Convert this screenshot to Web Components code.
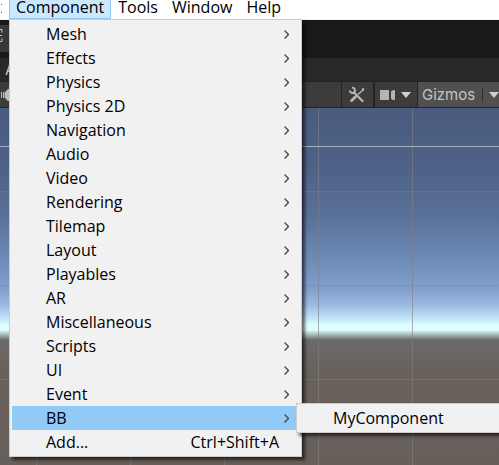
<!DOCTYPE html>
<html lang="en">
<head>
<meta charset="utf-8">
<title>Scene editor</title>
<style>
  html, body { height: 100%; margin: 0; overflow: hidden; }
  body { font: 16px/24px "Open Sans", "Noto Sans", sans-serif; color: #000; }
</style>
</head>
<body>
<editor-window>
  <menu-bar slot="menu">
    <menu-title class="cut">t</menu-title>
    <menu-title active>Component</menu-title>
    <menu-title>Tools</menu-title>
    <menu-title>Window</menu-title>
    <menu-title>Help</menu-title>
  </menu-bar>
  <scene-header slot="header"></scene-header>
  <scene-view slot="scene"></scene-view>
  <drop-menu slot="popup">
    <menu-entry more>Mesh</menu-entry>
    <menu-entry more>Effects</menu-entry>
    <menu-entry more>Physics</menu-entry>
    <menu-entry more>Physics 2D</menu-entry>
    <menu-entry more>Navigation</menu-entry>
    <menu-entry more>Audio</menu-entry>
    <menu-entry more>Video</menu-entry>
    <menu-entry more>Rendering</menu-entry>
    <menu-entry more>Tilemap</menu-entry>
    <menu-entry more>Layout</menu-entry>
    <menu-entry more>Playables</menu-entry>
    <menu-entry more>AR</menu-entry>
    <menu-entry more>Miscellaneous</menu-entry>
    <menu-entry more>Scripts</menu-entry>
    <menu-entry more>UI</menu-entry>
    <menu-entry more>Event</menu-entry>
    <menu-entry more selected>BB
      <drop-menu slot="submenu" sub><menu-entry>MyComponent</menu-entry></drop-menu>
    </menu-entry>
    <menu-entry keys="Ctrl+Shift+A">Add...</menu-entry>
  </drop-menu>
</editor-window>

<script>
class Base extends HTMLElement {
  constructor() {
    super();
    this.attachShadow({ mode: 'open' }).innerHTML =
      '<style>:host,*{box-sizing:border-box}button{font:inherit;color:inherit;border:0;margin:0;padding:0;background:none;text-align:left}</style>' + this.view();
  }
}

customElements.define('editor-window', class extends Base {
  view() { return `<style>
    :host { display: flex; flex-direction: column; height: 100%; position: relative; overflow: hidden; }
    ::slotted([slot=scene]) { flex: 1; }
    ::slotted([slot=popup]) { position: absolute; left: 9px; top: 19px; }
    </style><slot name="menu"></slot><slot name="header"></slot><slot name="scene"></slot><slot name="popup"></slot>`; }
});

customElements.define('menu-bar', class extends Base {
  view() { return `<style>
    :host { display: block; background: #fff; border-bottom: 1px solid #f0f0f0; height: 20px; }
    nav { display: flex; height: 19px; }
    </style><nav><slot></slot></nav>`; }
});

customElements.define('menu-title', class extends Base {
  view() { return `<style>
    :host { display: block; }
    button { display: flex; align-items: flex-start; height: 19px; line-height: 14px; padding: 0 6px; border: 1px solid transparent; border-top: 0; white-space: nowrap; }
    :host([active]) button { background: #cce8ff; border-color: #90c8f6; }
    :host(.cut) button { width: 9px; justify-content: flex-end; padding-left: 0; overflow: hidden; }
    </style><button type="button"><slot></slot></button>`; }
});

customElements.define('scene-header', class extends Base {
  view() { return `<style>
    :host { display: block; background: #191919; color: #c4c4c4; font: 15px/24px Inter, "Liberation Sans", sans-serif; }
    .top { height: 38px; padding: 5px 0 6px; }
    .tool { display: block; width: 40px; height: 27px; background: #383838; }
    .tabs { height: 24px; background: #282828; padding-left: 5px; border-bottom: 1px solid #232323; }
    .bar { height: 26px; background: #3c3c3c; border-bottom: 1px solid #232323; display: flex; }
    .bar button { height: 25px; display: flex; align-items: center; background: #3c3c3c; border-left: 1px solid #232323; }
    .tools { margin-left: auto; width: 33px; padding-left: 6px; border-right: 1px solid #232323; }
    .cam { width: 43px; padding-left: 5px; gap: 6px; }
    .bar .giz { width: 82px; padding-left: 4px; background: #505050; overflow: hidden; }
    .giz i { width: 1px; height: 15px; background: #303030; margin: 0 6px 0 auto; }
    svg { display: block; flex: none; }
    .bar .sound { width: 9px; overflow: hidden; border: 0; }
    </style>
    <div class="top"><button class="tool" type="button" aria-label="Transform tool"><svg width="9" height="27" stroke="#c4c4c4" fill="none"><path d="M0 4.500h2v3M0 10.500h2M0 16.500h2v-3"/></svg></button></div>
    <div class="tabs">A</div>
    <div class="bar">
      <button class="sound" type="button" aria-label="Audio"><svg width="9" height="16" fill="#bcbcbc"><path d="M1 5h1v6H1zM3 5h1v6H3zM4.500 5.500L8 2h1v12H8L4.500 10.500z"/></svg></button>
      <button class="tools" type="button" aria-label="Editor tools"><svg width="18" height="18" viewBox="0 0 18 18" fill="none" stroke="#b4b4b4"><path d="M6 6.500l8.500 8.500" stroke-width="2.300" stroke-linecap="round"/><path d="M4 1.800A2.600 2.600 0 1 1 1.800 4.500" stroke-width="2"/><path d="M15 4L10 8.500" stroke-width="1.500"/><path d="M15 1.800l1.500 1.500-1 1.700-2-1.700z" fill="#b4b4b4" stroke="none"/><path d="M7.500 10.800L3.500 14.800" stroke-width="2.800" stroke-linecap="round"/></svg></button>
      <button class="cam" type="button" aria-label="Scene camera"><svg width="15" height="12" fill="#b4b4b4"><path d="M0 1h9v10H0zM11 3q0-2 4-2v10q-4 0-4-2z"/></svg><svg width="10" height="6" fill="#d0d0d0"><path d="M0 0h10L5 6z"/></svg></button>
      <button class="giz" type="button"><span>Gizmos</span><i></i><svg width="10" height="6" fill="#d0d0d0"><path d="M0 0h10L5 6z"/></svg></button>
    </div>`; }
});

customElements.define('scene-view', class extends Base {
  view() { return `<style>
    :host { display: block; background:
      linear-gradient(#a4b0c2, #a4b0c2) 0 38px / 100% 1px no-repeat,
      repeating-linear-gradient(90deg, transparent 0 36px, #80808099 36px 37px, transparent 37px 94px),
      linear-gradient(#80808066, #80808066) 0 83px / 100% 1px no-repeat,
      linear-gradient(#80808066, #80808066) 0 177px / 100% 1px no-repeat,
      linear-gradient(#80808066, #80808066) 0 271px / 100% 1px no-repeat,
      linear-gradient(#495c7f 0, #4d6286 60px, #5a7199 110px, #7291bd 160px, #83a0ce 182px, #9dbce3 198px, #bfdff5 209px, #dcffff 217px, #e0ffff 222px, #a5b4b5 227px, #6c6a69 232px, #6b6563 245px, #68625b 266px, #69605a 300px, #675f5a 357px); }
    </style>`; }
});

customElements.define('drop-menu', class extends Base {
  view() { return `<style>
    :host { display: block; width: 293px; background: #f1f1f1; border: 1px solid #ccc; padding: 2px; box-shadow: 3px 3px 3px #0009; }
    :host([sub]) { position: absolute; left: 284px; top: -3px; }
    </style><slot></slot>`; }
});

customElements.define('menu-entry', class extends Base {
  view() { return `<style>
    :host { display: block; position: relative; }
    button { display: flex; width: 100%; height: 24px; line-height: 24px; padding: 0 10px 0 34px; align-items: center; }
    :host([selected]) button { background: #91c9f7; }
    kbd { font: inherit; margin-left: auto; padding-right: 10px; }
    svg { display: none; margin-left: auto; }
    :host([more]) svg { display: block; }
    :host([more]) kbd { display: none; }
    </style><button type="button"><span><slot></slot></span><kbd></kbd><svg width="5" height="9" fill="none" stroke="#444" stroke-width="1.300"><path d="M.5.5l4 4-4 4"/></svg></button><slot name="submenu"></slot>`; }
  connectedCallback() { this.shadowRoot.querySelector('kbd').textContent = this.getAttribute('keys') || ''; }
});
</script>
</body>
</html>
